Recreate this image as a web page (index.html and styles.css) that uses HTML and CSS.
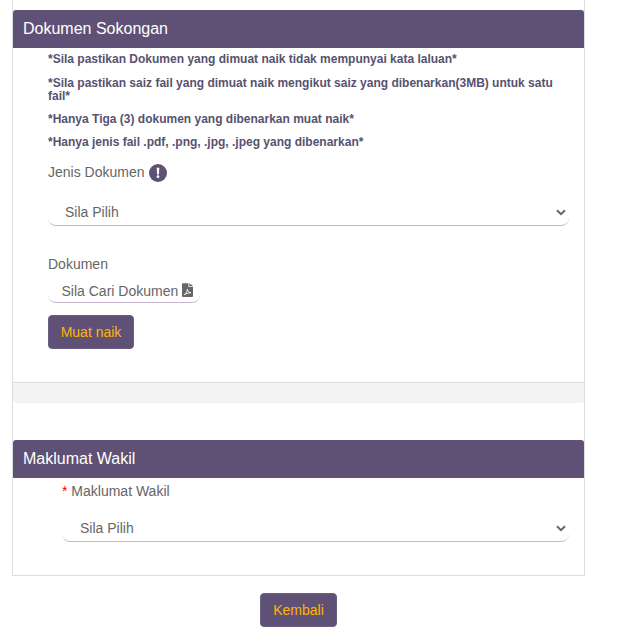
FILE: index.html
```html
<!DOCTYPE html>
<html lang="ms">
<head>
    <meta charset="UTF-8">
    <meta name="viewport" content="width=device-width, initial-scale=1.0">
    <title>Dokumen Sokongan</title>
    <link rel="stylesheet" href="styles.css">
</head>
<body>
    <div class="container">
        <div class="panel panel-docs">
            <h3 class="panel-title">Dokumen Sokongan</h3>
            <div class="panel-body">
                <p class="note">*Sila pastikan Dokumen yang dimuat naik tidak mempunyai kata laluan*</p>
                <p class="note">*Sila pastikan saiz fail yang dimuat naik mengikut saiz yang dibenarkan(3MB) untuk satu fail*</p>
                <p class="note">*Hanya Tiga (3) dokumen yang dibenarkan muat naik*</p>
                <p class="note">*Hanya jenis fail .pdf, .png, .jpg, .jpeg yang dibenarkan*</p>

                <label class="field-label label-type" for="doc-type">Jenis Dokumen
                    <svg class="info-icon" viewBox="0 0 18 18" width="18" height="18" aria-hidden="true">
                        <circle cx="9" cy="9" r="9" fill="#5f5175"/>
                        <path d="M7.700 3.800h2.600l-.4 6.600H8.100z" fill="#fff"/>
                        <circle cx="9" cy="12.700" r="1.400" fill="#fff"/>
                    </svg>
                </label>
                <div class="select-wrap">
                    <select id="doc-type"><option>Sila Pilih</option></select>
                    <svg class="chevron" viewBox="0 0 10 7" width="10" height="7" aria-hidden="true">
                        <path d="M1 1.200l4 4 4-4" fill="none" stroke="#666" stroke-width="2"/>
                    </svg>
                </div>

                <label class="field-label label-doc">Dokumen</label>
                <div class="file-input">
                    Sila Cari Dokumen
                    <svg class="pdf-icon" viewBox="0 0 12 15" width="11" height="14" aria-hidden="true">
                        <path d="M0 1a1 1 0 0 1 1-1h6v4h5v10a1 1 0 0 1-1 1H1a1 1 0 0 1-1-1z" fill="#666"/>
                        <path d="M8 0l4 3.200H8z" fill="#666"/>
                        <path d="M2.500 12.500c2-1 3-3 3.400-6 .5 2.500 1.600 3.800 3.900 4-2.500 0-5 .8-7.300 2z" fill="none" stroke="#fff" stroke-width="1"/>
                    </svg>
                </div>
                <button class="btn btn-upload">Muat naik</button>
            </div>
            <div class="panel-footer"></div>
        </div>

        <div class="panel panel-rep">
            <h3 class="panel-title">Maklumat Wakil</h3>
            <div class="panel-body rep-body">
                <label class="field-label label-rep" for="rep"><span class="required">*</span> Maklumat Wakil</label>
                <div class="select-wrap">
                    <select id="rep"><option>Sila Pilih</option></select>
                    <svg class="chevron" viewBox="0 0 10 7" width="10" height="7" aria-hidden="true">
                        <path d="M1 1.200l4 4 4-4" fill="none" stroke="#666" stroke-width="2"/>
                    </svg>
                </div>
            </div>
        </div>
    </div>

    <div class="actions">
        <button class="btn btn-back">Kembali</button>
    </div>
</body>
</html>
```
FILE: styles.css
```css
body {
    margin: 0;
    font-family: "Liberation Sans", Arial, sans-serif;
    font-size: 14px;
    color: #666;
    background: #fff;
}
.container {
    width: 571px;
    margin-left: 12px;
    padding-top: 10px;
    border: 1px solid #ddd;
    border-top: none;
}
.panel-title {
    margin: 0;
    height: 38px;
    padding-left: 10px;
    font-size: 16px;
    font-weight: normal;
    line-height: 37px;
    color: #fff;
    background-color: #5f5175;
    border-radius: 3px 3px 0 0;
    box-sizing: border-box;
}
.panel-body {
    padding: 5px 15px 33px 35px;
}
.note {
    margin: 0 0 10px;
    font-size: 12px;
    font-weight: bold;
    line-height: 13px;
    color: #565270;
}
.note:first-child {
    margin-bottom: 11px;
}
.field-label {
    display: block;
    line-height: 20px;
}
.label-type {
    display: flex;
    align-items: center;
    gap: 4px;
    margin-top: 13px;
    margin-bottom: 17px;
}
.info-icon {
    margin-top: 2px;
}
.select-wrap {
    position: relative;
}
select {
    display: block;
    width: 100%;
    height: 27px;
    padding: 0 17px;
    font-family: inherit;
    font-size: 14px;
    color: #666;
    background: #fff;
    border: none;
    border-bottom: 1px solid #c3bbc8;
    border-radius: 0 0 8px 8px;
    appearance: none;
    -webkit-appearance: none;
    outline: none;
}
.chevron {
    position: absolute;
    right: 3px;
    top: 10px;
}
.label-doc {
    margin-top: 28px;
}
.file-input {
    width: 138.500px;
    height: 19px;
    margin-top: 9px;
    padding: 0 0 0 13.500px;
    line-height: 17px;
    border-bottom: 1px solid #c9b4cf;
    border-radius: 0 0 8px 8px;
    white-space: nowrap;
}
.pdf-icon {
    vertical-align: -1px;
}
.btn {
    display: block;
    height: 34px;
    padding: 0;
    font-family: inherit;
    font-size: 14px;
    color: #ffb400;
    background-color: #5f5175;
    border: 1px solid #6b5e80;
    border-radius: 4px;
}
.btn-upload {
    width: 86px;
    margin-top: 12px;
}
.panel-footer {
    height: 20px;
    background-color: #f3f3f3;
    border-top: 1px solid #ddd;
    border-radius: 0 0 3px 3px;
}
.panel-rep {
    margin-top: 37px;
}
.rep-body {
    padding: 3px 15px 33px 49px;
}
.label-rep {
    margin-bottom: 14px;
}
.rep-body select {
    padding-left: 18px;
}
.required {
    color: #f00;
}
.actions {
    display: flex;
    justify-content: center;
    width: 597px;
    margin-top: 17px;
}
.btn-back {
    width: 77px;
}
```
